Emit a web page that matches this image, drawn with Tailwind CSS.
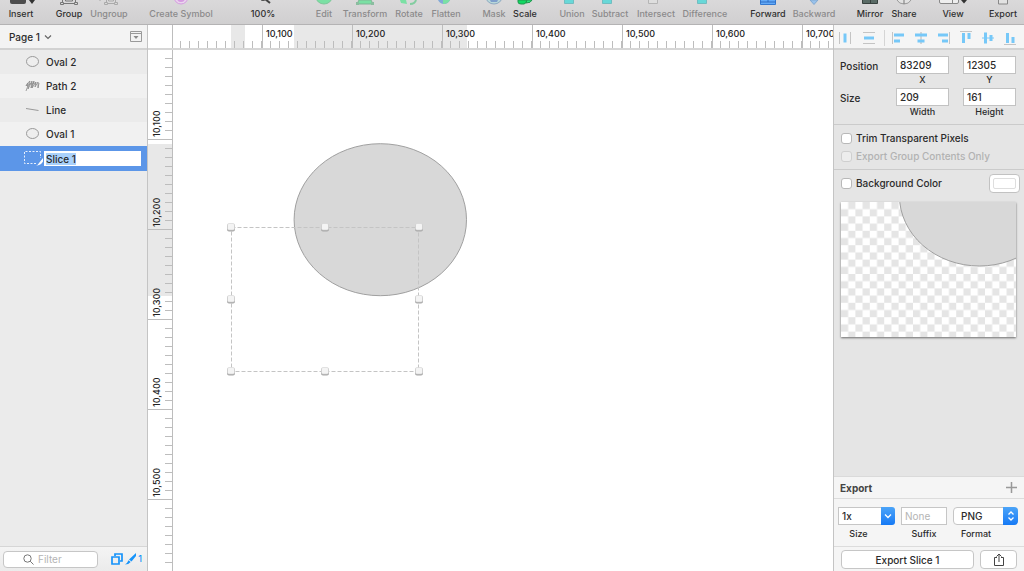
<!DOCTYPE html>
<html lang="en">
<head>
<meta charset="utf-8">
<meta name="viewport" content="width=device-width, initial-scale=1">
<title>Page 1</title>
<script src="https://cdn.jsdelivr.net/npm/@tailwindcss/browser@4"></script>
</head>
<body class="h-screen flex flex-col overflow-hidden bg-white font-['Inter','Liberation_Sans',sans-serif] text-[10px] leading-3 font-medium text-[#2b2b2b]">

<!-- Toolbar -->
<header class="flex h-[25px] shrink-0 border-b border-[#b4b3b4] bg-linear-to-b from-[#dad9da] to-[#d0cfd0] text-[9px] text-[#2f2f2f]">
    <button class="flex w-[42px] shrink-0 flex-col items-center whitespace-nowrap"><svg class="h-2 w-7" viewBox="0 0 28 8"><path d="M3 0h16v2q0 2-2 2H5q-2 0-2-2z" fill="#4d4d4d"/><path d="M22 0h6l-3 4z" fill="#333"/></svg>Insert</button>
    <button class="ml-2.5 flex w-[34px] shrink-0 flex-col items-center whitespace-nowrap"><svg class="h-2 w-5" viewBox="0 0 20 8" fill="none" stroke="#777"><path d="M3.500 0v4M16.500 0v4M4 3.500h12M6.500 0v1h7V0"/><path d="M1.500 2.500h3v2h-3zM15.500 2.500h3v2h-3z" fill="#d8d8d8"/></svg>Group</button>
    <button class="flex w-[46px] shrink-0 flex-col items-center whitespace-nowrap text-[#8b8a8b]"><svg class="h-2 w-5" viewBox="0 0 20 8" fill="none" stroke="#aaa"><path d="M0 0h2M7.500 0v4M16.500 0v4M8 3.500h8M9.500 0v1h5V0"/><path d="M5.500 2.500h3v2h-3zM15.500 2.500h3v2h-3z" fill="#d8d8d8"/></svg>Ungroup</button>
    <button class="ml-3.5 flex w-[70px] shrink-0 flex-col items-center whitespace-nowrap text-[#8b8a8b]"><svg class="h-2 w-4" viewBox="0 0 16 8" fill="none" stroke="#d59ce0"><path d="M1 -3a7 7 0 0 0 14 0" fill="#ead5ee"/><path d="M5 0q3 2 6 0" stroke-width="2"/></svg>Create Symbol</button>
    <button class="ml-[29px] flex w-9 shrink-0 flex-col items-center whitespace-nowrap"><svg class="h-2 w-5" viewBox="0 0 20 8" fill="none" stroke="#444"><path d="M8 0q2 1 4 0" /><path d="M12 -1l5 4" stroke-width="2"/></svg>100%</button>
    <button class="ml-[31px] flex w-6 shrink-0 flex-col items-center whitespace-nowrap text-[#8b8a8b]"><svg class="h-2 w-4" viewBox="0 0 16 8"><path d="M0 -3a8 7 0 0 0 16 0z" fill="#7be0a4" stroke="#80c79b"/></svg>Edit</button>
    <button class="ml-1 flex w-[50px] shrink-0 flex-col items-center whitespace-nowrap text-[#8b8a8b]"><svg class="h-2 w-5" viewBox="0 0 20 8"><path d="M4 0h12l2 4H2z" fill="#7be0a4" stroke="#80b596"/><path d="M1 2h3v3H1zM16 2h3v3h-3z" fill="#8bbda0"/></svg>Transform</button>
    <button class="ml-0.5 flex w-[34px] shrink-0 flex-col items-center whitespace-nowrap text-[#8b8a8b]"><svg class="h-2 w-5" viewBox="0 0 20 8" fill="none"><path d="M1 0l1 3 6 1-1-4z" fill="#7be0a4"/><path d="M11 4q5 0 6-4" stroke="#83cda0" stroke-width="2"/></svg>Rotate</button>
    <button class="ml-0.5 flex w-9 shrink-0 flex-col items-center whitespace-nowrap text-[#8b8a8b]"><svg class="mr-1 h-2 w-3" viewBox="0 0 12 8"><path d="M0 0q2 4 6 4t6-4z" fill="#83a9d8"/><path d="M5 0v4q5 0 7-4z" fill="#7be0a4"/></svg>Flatten</button>
    <button class="ml-4 flex w-7 shrink-0 flex-col items-center whitespace-nowrap text-[#8b8a8b]"><svg class="h-2 w-4" viewBox="0 0 16 8"><path d="M0 -3a8 7 0 0 0 16 0z" fill="#b9d8d9" stroke="#8ea9c2"/><path d="M4 0h8l-1 2H5z" fill="#7f9fcc"/></svg>Mask</button>
    <button class="ml-[3px] flex w-7 shrink-0 flex-col items-center whitespace-nowrap"><svg class="h-2 w-4" viewBox="0 0 16 8"><path d="M1 0v2q0 2 3 2h3q2 0 3-4z" fill="#10d862" stroke="#21964f"/><path d="M9 3q5 0 6-3h-5z" fill="#2fe47c" stroke="#21964f"/></svg>Scale</button>
    <button class="ml-[18px] flex w-[30px] shrink-0 flex-col items-center whitespace-nowrap text-[#8b8a8b]"><svg class="mr-1.5 h-2 w-3" viewBox="0 0 12 8"><path d="M1.500 0v3.500h9V0" fill="#68d8d8" stroke="#72bdc0"/></svg>Union</button>
    <button class="ml-px flex w-11 shrink-0 flex-col items-center whitespace-nowrap text-[#8b8a8b]"><svg class="mr-1.5 h-2 w-3" viewBox="0 0 12 8"><path d="M1.500 0v3.500h9V0" fill="#68d8d8" stroke="#72bdc0"/></svg>Subtract</button>
    <button class="ml-0.5 flex w-11 shrink-0 flex-col items-center whitespace-nowrap text-[#8b8a8b]"><svg class="mr-1.5 h-2 w-3" viewBox="0 0 12 8"><path d="M1.500 0v3.500h9V0" fill="#dedede" stroke="#b5b5b5"/></svg>Intersect</button>
    <button class="ml-0.5 flex w-[50px] shrink-0 flex-col items-center whitespace-nowrap text-[#8b8a8b]"><svg class="mr-1.5 h-2 w-3" viewBox="0 0 12 8"><path d="M1.500 0v3.500h9V0" fill="#68d8d8" stroke="#72bdc0"/></svg>Difference</button>
    <button class="ml-[18px] flex w-10 shrink-0 flex-col items-center whitespace-nowrap"><svg class="h-2 w-4" viewBox="0 0 16 8"><path d="M.5 0v4.500h15V0" fill="#62aaf8" stroke="#3478cf"/><path d="M0 2h16M8 0v2" stroke="#2c6cc4"/></svg>Forward</button>
    <button class="ml-[3px] flex w-[46px] shrink-0 flex-col items-center whitespace-nowrap text-[#8b8a8b]"><svg class="h-2 w-3" viewBox="0 0 12 8"><path d="M2 0h8L6 4.500z" fill="#99c2ec" stroke="#83a9d0"/></svg>Backward</button>
    <button class="ml-[18px] flex w-[30px] shrink-0 flex-col items-center whitespace-nowrap"><svg class="h-2 w-4" viewBox="0 0 16 8"><path d="M.5 0v3.500h15V0" fill="#5a6b66" stroke="#38423f"/><path d="M8.500 0v4" stroke="#38423f"/></svg>Mirror</button>
    <button class="ml-1 flex w-[30px] shrink-0 flex-col items-center whitespace-nowrap"><svg class="h-2 w-4" viewBox="0 0 16 8" fill="none" stroke="#999"><path d="M1 0q2 4 7 4t7-4" fill="#e2e2e2"/><path d="M8 0v4" stroke="#777"/></svg>Share</button>
    <button class="ml-[22px] flex w-6 shrink-0 flex-col items-center whitespace-nowrap"><svg class="h-2 w-7 shrink-0" viewBox="0 0 28 8"><path d="M.5 0v2q0 1.500 1.500 1.500h16q1.500 0 1.500-1.500V0" fill="#eee" stroke="#888"/><path d="M13.500 0v3" stroke="#888"/><path d="M22 0h6l-3 3.500z" fill="#333"/></svg>View</button>
    <button class="ml-[22px] flex w-8 shrink-0 flex-col items-center whitespace-nowrap"><svg class="h-2 w-3" viewBox="0 0 12 8"><path d="M1.500 0v4h9V0" fill="#e2e2e2" stroke="#888"/></svg>Export</button>
</header>

<div class="flex min-h-0 flex-1">

    <!-- Layer list -->
    <aside class="flex w-[148px] shrink-0 flex-col border-r border-[#c4c4c4] bg-[#ebebeb]">
        <div class="flex h-[25px] items-center border-b-2 border-[#d2d2d2] bg-[#f3f3f3] pl-[9px] pr-[5px]">
            <button class="flex items-center gap-1">Page 1<svg class="size-2" viewBox="0 0 8 8" fill="none" stroke="#666" stroke-width="1.200"><path d="M1 2.500l3 3 3-3"/></svg></button>
            <button class="ml-auto" aria-label="Toggle pages"><svg class="h-[11px] w-3" viewBox="0 0 12 11" fill="none" stroke="#9a9a9a"><path d="M.5 .5h11v10H.5zM1 2.500h10"/><path d="M3.500 5h5L6 8z" fill="#8a8a8a" stroke="none"/></svg></button>
        </div>
        <ul>
            <li class="flex h-6 items-center gap-1.5 pl-[25px]"><svg class="h-3 w-[15px]" viewBox="0 0 15 12"><ellipse cx="7.500" cy="5.500" rx="6" ry="5" fill="#eee" stroke="#999"/></svg>Oval 2</li>
            <li class="flex h-6 items-center gap-1.5 bg-[#f1f1f1] pl-[25px]"><svg class="h-3 w-[15px]" viewBox="0 0 15 12" fill="none" stroke="#888" stroke-width=".8"><path d="M1 11q2-4 2-8-1 2-2 3 1-3 4-5l-2 8 4-8-1 7 3-7-2 7 4-6-1 5 3-5v6l1-5M2 6q4-4 9-3"/></svg>Path 2</li>
            <li class="flex h-6 items-center gap-1.5 pl-[25px]"><svg class="h-3 w-[15px]" viewBox="0 0 15 12"><path d="M1 4.500l12.500 2" stroke="#999"/></svg>Line</li>
            <li class="flex h-6 items-center gap-1.5 bg-[#f1f1f1] pl-[25px]"><svg class="h-3 w-[15px]" viewBox="0 0 15 12"><ellipse cx="7.500" cy="5.500" rx="6" ry="5" fill="#eee" stroke="#999"/></svg>Oval 1</li>
            <li class="flex h-[25px] items-center bg-[#5c96e8] pl-6 pr-1.5">
                <svg class="h-[15px] w-5 shrink-0" viewBox="0 0 20 15" fill="none" stroke="#fff"><path d="M12 12.500H.5v-12h16V7" stroke-dasharray="2 1.500" opacity=".85"/><path d="M12 14.500q2-.5 3-2.500l4-5v3.500q-2 4-7 4z" fill="#fff" stroke="none"/></svg>
                <input id="layer-name" type="text" aria-label="Layer name" value="Slice 1" class="h-[15px] min-w-0 flex-1 bg-white pl-0.5 outline-none selection:bg-[#a9d1fb] selection:text-[#2b2b2b]">
            </li>
        </ul>
        <div class="mt-auto flex h-[25px] items-center border-t border-[#d6d6d6] bg-linear-to-b from-[#f4f4f4] to-[#ebebeb] pl-[3px] pr-[5px]">
            <label class="flex h-[17px] w-[95px] items-center gap-1 rounded-sm border border-[#c6c6c6] bg-white pl-[19px]">
                <svg class="size-[11px] shrink-0" viewBox="0 0 11 11" fill="none" stroke="#777"><circle cx="4.500" cy="4.500" r="3.700"/><path d="M7.200 7.200L10.500 10.500"/></svg>
                <input type="text" aria-label="Filter" placeholder="Filter" class="min-w-0 flex-1 font-normal outline-none placeholder:text-[#b4b4b4]">
            </label>
            <button class="ml-auto" aria-label="Show shapes"><svg class="size-3" viewBox="0 0 12 12" fill="none" stroke="#1693fa" stroke-width="1.700"><path d="M1 4h7v7H1z"/><path d="M4 3V1h7v7H9"/></svg></button>
            <button class="ml-0.5 flex items-center gap-0.5 text-[9px] text-[#1693fa]" aria-label="Slices: 1"><svg class="h-3 w-[11px]" viewBox="0 0 11 12" fill="#1693fa"><path d="M11 0v3L6.500 8.500 4 6.500zM3.500 7.200l2.200 1.800Q3.500 11.500 0 11.500q2.500-1.500 3.500-4.300z"/></svg>1</button>
        </div>
    </aside>

    <!-- Rulers and canvas -->
    <main class="flex min-w-0 flex-1 flex-col bg-white">
        <svg class="h-[25px] w-full shrink-0" fill="#222" stroke="none">
            <defs>
                <pattern id="ticks-x" x="24" width="9" height="25" patternUnits="userSpaceOnUse"><path d="M9 16v7H8v-7z" fill="#bdbdbd"/></pattern>
            </defs>
            <path d="M83 0h14v23H83zM146 0h173v23H146z" fill="#e8e8e8"/>
            <rect x="25" y="0" width="100%" height="25" fill="url(#ticks-x)"/>
            <path d="M24 0h1v25h-1zM114 0h1v23h-1zM204 0h1v23h-1zM294 0h1v23h-1zM384 0h1v23h-1zM474 0h1v23h-1zM564 0h1v23h-1zM654 0h1v23h-1z" fill="#bdbdbd"/>
            <rect y="23" width="100%" height="2" fill="#d6d6d6"/>
            <g font-size="9">
                <text x="118" y="12">10,100</text><text x="208" y="12">10,200</text><text x="298" y="12">10,300</text><text x="388" y="12">10,400</text><text x="478" y="12">10,500</text><text x="568" y="12">10,600</text><text x="658" y="12">10,700</text>
            </g>
        </svg>
        <div class="flex min-h-0 flex-1">
            <svg class="h-full w-[25px] shrink-0" fill="#222">
                <defs>
                    <pattern id="ticks-y" y="-1" width="25" height="9" patternUnits="userSpaceOnUse"><path d="M17 0h7v1h-7z" fill="#bdbdbd"/></pattern>
                </defs>
                <rect y="94" width="24" height="152" fill="#e8e8e8"/>
                <rect width="25" height="100%" fill="url(#ticks-y)"/>
                <path d="M0 89h24v1H0zM0 179h24v1H0zM0 269h24v1H0zM0 359h24v1H0zM0 449h24v1H0z" fill="#bdbdbd"/>
                <rect x="24" width="1" height="100%" fill="#bdbdbd"/>
                <g font-size="9">
                    <text transform="translate(12 87) rotate(-90)">10,100</text><text transform="translate(12 177) rotate(-90)">10,200</text><text transform="translate(12 267) rotate(-90)">10,300</text><text transform="translate(12 357) rotate(-90)">10,400</text><text transform="translate(12 447) rotate(-90)">10,500</text>
                </g>
            </svg>
            <svg class="h-full min-w-0 flex-1">
                <defs>
                    <g id="handle"><rect x="-4" y="-3" width="8" height="7.500" rx="2" fill="#a8a8a8"/><rect x="-3.500" y="-3.500" width="7" height="6.500" rx="1.500" fill="#f4f4f4" stroke="#d2d2d2" stroke-width=".6"/></g>
                </defs>
                <ellipse cx="207.300" cy="169.700" rx="86.200" ry="76" fill="#d8d8d8" stroke="#a0a0a0"/>
                <path d="M58.500 177.500h187v144h-187z" fill="none" stroke="#c4c4c4" stroke-dasharray="4 2"/>
                <use href="#handle" x="58" y="177"/><use href="#handle" x="152" y="177"/><use href="#handle" x="246" y="177"/>
                <use href="#handle" x="58" y="249"/><use href="#handle" x="246" y="249"/>
                <use href="#handle" x="58" y="321"/><use href="#handle" x="152" y="321"/><use href="#handle" x="246" y="321"/>
            </svg>
        </div>
    </main>

    <!-- Inspector -->
    <aside class="flex w-[191px] shrink-0 flex-col border-l border-[#c4c4c4] bg-[#e5e5e5]">
        <div class="flex h-[25px] items-center border-b-2 border-[#d2d2d2] bg-[#f5f5f5] pl-1 pt-0.5">
            <button aria-label="Distribute horizontally"><svg class="size-3.5" viewBox="0 0 14 14"><path d="M1.500 1v12M12.500 1v12" stroke="#c4c4c4"/><path d="M5.500 2.500h3v9h-3z" fill="#76c8f8"/></svg></button>
            <button class="ml-2.5" aria-label="Distribute vertically"><svg class="size-3.5" viewBox="0 0 14 14"><path d="M1 1.500h12M1 12.500h12" stroke="#c4c4c4"/><path d="M2 5.500h10v3H2z" fill="#76c8f8"/></svg></button>
            <span class="ml-2 h-4 w-px bg-[#d5d5d5]"></span>
            <button class="ml-1.5" aria-label="Align left"><svg class="size-3.5" viewBox="0 0 14 14"><path d="M1.500 1v12" stroke="#c4c4c4"/><path d="M3 2.500h10v3H3zM3 8.500h6v3H3z" fill="#76c8f8"/></svg></button>
            <button class="ml-[9px]" aria-label="Align center"><svg class="size-3.5" viewBox="0 0 14 14"><path d="M7 1v12" stroke="#b4b4b4"/><path d="M1 2.500h12v3H1zM3.500 8.500h7v3h-7z" fill="#76c8f8"/></svg></button>
            <button class="ml-[9px]" aria-label="Align right"><svg class="size-3.5" viewBox="0 0 14 14"><path d="M12.500 1v12" stroke="#c4c4c4"/><path d="M1 2.500h10v3H1zM5 8.500h6v3H5z" fill="#76c8f8"/></svg></button>
            <button class="ml-2" aria-label="Align top"><svg class="size-3.5" viewBox="0 0 14 14"><path d="M1 .5h12" stroke="#c4c4c4"/><path d="M3 2h3v10H3zM8.500 2h3v6h-3z" fill="#76c8f8"/></svg></button>
            <button class="ml-2" aria-label="Align middle"><svg class="size-3.5" viewBox="0 0 14 14"><path d="M1 7h12" stroke="#76c8f8"/><path d="M3 1.500h3v11H3zM8.500 4h3v6h-3z" fill="#76c8f8"/></svg></button>
            <button class="ml-2" aria-label="Align bottom"><svg class="size-3.5" viewBox="0 0 14 14"><path d="M1 13.500h12" stroke="#c4c4c4"/><path d="M3 2h3v10H3zM8.500 6h3v6h-3z" fill="#76c8f8"/></svg></button>
        </div>

        <div class="grid grid-cols-[56px_53px_53px] gap-y-0.5 pl-1.5 pt-1.5 pb-1.5">
            <span class="pt-1">Position</span>
            <label class="flex flex-col items-center text-[9px]"><input type="text" value="83209" class="h-[18px] w-full border border-[#c2c2c2] bg-white pl-[3px] text-[10px] outline-none">X</label>
            <label class="ml-3.5 flex w-[53px] flex-col items-center text-[9px]"><input type="text" value="12305" class="h-[18px] w-full border border-[#c2c2c2] bg-white pl-[3px] text-[10px] outline-none">Y</label>
            <span class="pt-1">Size</span>
            <label class="flex flex-col items-center text-[9px]"><input type="text" value="209" class="h-[18px] w-full border border-[#c2c2c2] bg-white pl-[3px] text-[10px] outline-none">Width</label>
            <label class="ml-3.5 flex w-[53px] flex-col items-center text-[9px]"><input type="text" value="161" class="h-[18px] w-full border border-[#c2c2c2] bg-white pl-[3px] text-[10px] outline-none">Height</label>
        </div>

        <div class="flex h-[45px] flex-col justify-center gap-1.5 border-t border-[#cbcbcb] pl-[7px]">
            <label class="flex items-center gap-1"><input type="checkbox" class="size-[11px] appearance-none rounded-[3px] border border-[#b8b8b8] bg-white">Trim Transparent Pixels</label>
            <label class="flex items-center gap-1 text-[#b2b2b2]"><input type="checkbox" disabled class="size-[11px] appearance-none rounded-[3px] border border-[#cfcfcf] bg-[#ededed]">Export Group Contents Only</label>
        </div>

        <div class="flex h-[27px] items-center border-t border-[#cbcbcb] pl-[7px] pr-1">
            <label class="flex items-center gap-1"><input type="checkbox" class="size-[11px] appearance-none rounded-[3px] border border-[#b8b8b8] bg-white">Background Color</label>
            <button class="ml-auto h-[19px] w-[31px] rounded-sm border border-[#c2c2c2] bg-white p-[3px]" aria-label="Background color"><span class="block h-full rounded-[2px] border border-[#dedede]"></span></button>
        </div>

        <div class="mt-1.5 ml-[7px] mr-2 bg-white shadow-[0_1px_2px_#0008]">
            <svg class="block h-[135px] w-full">
                <defs>
                    <pattern id="checker" width="14.400" height="14.400" patternUnits="userSpaceOnUse"><path d="M7.200 0h7.200v7.200H7.200zM0 7.200h7.200v7.200H0z" fill="#e5e5e5"/></pattern>
                </defs>
                <rect width="100%" height="100%" fill="url(#checker)"/>
                <ellipse cx="138.400" cy="-6.500" rx="80" ry="70.500" fill="#d8d8d8" stroke="#a0a0a0"/>
            </svg>
        </div>

        <!-- Export settings -->
        <section class="mt-auto border-t border-[#dadada] bg-[#f5f5f5]">
            <div class="flex h-[22px] items-center justify-between border-b border-[#dcdcdc] pl-1.5 pr-[7px]">
                <h2 class="font-bold text-[#444]">Export</h2>
                <button aria-label="Add export size"><svg class="size-[11px]" viewBox="0 0 11 11" stroke="#999" stroke-width="1.500"><path d="M5.500 0v11M0 5.500h11"/></svg></button>
            </div>
            <div class="flex h-[47px] items-start pl-1 pt-2 text-[9px]">
                <div class="w-[57px]">
                    <div class="flex h-[18px]">
                        <input id="size" type="text" value="1x" class="min-w-0 flex-1 border border-r-0 border-[#c6c6c6] bg-white pl-[3px] text-[10px] outline-none">
                        <button aria-label="Choose size" class="flex w-3.5 items-center justify-center rounded-r-[3px] bg-linear-to-b from-[#4ba4f8] to-[#1479f5]"><svg class="size-2" viewBox="0 0 8 8" fill="none" stroke="#fff" stroke-width="1.300"><path d="M1 2.500l3 3 3-3"/></svg></button>
                    </div>
                    <label for="size" class="mt-[3px] block pr-4 text-center">Size</label>
                </div>
                <div class="ml-1.5 w-[46px]">
                    <input id="suffix" type="text" placeholder="None" class="block h-[18px] w-full border border-[#c6c6c6] bg-white pl-[3px] text-[10px] font-normal outline-none placeholder:text-[#b4b4b4]">
                    <label for="suffix" class="mt-[3px] block text-center">Suffix</label>
                </div>
                <div class="relative ml-1.5 w-[65px]">
                    <select id="format" class="block h-[18px] w-full appearance-none rounded-sm border border-[#c6c6c6] bg-white pl-[7px] text-[10px] outline-none"><option>PNG</option><option>JPG</option><option>PDF</option></select>
                    <span class="pointer-events-none absolute top-0 right-0 flex h-[18px] w-[15px] items-center justify-center rounded-r-sm bg-linear-to-b from-[#4ba4f8] to-[#1479f5]"><svg class="h-2.5 w-2" viewBox="0 0 8 10" fill="none" stroke="#fff" stroke-width="1.300"><path d="M1.500 3.500L4 1l2.500 2.500M1.500 6.500L4 9l2.500-2.500"/></svg></span>
                    <label for="format" class="mt-[3px] block pr-[19px] text-center">Format</label>
                </div>
            </div>
            <div class="flex h-[25px] items-start gap-1.5 border-t border-[#dcdcdc] px-[7px] pt-[3px]">
                <button class="h-[19px] flex-1 rounded-sm border border-[#c6c6c6] bg-white">Export Slice 1</button>
                <button class="flex h-[19px] w-[37px] items-center justify-center rounded-sm border border-[#c6c6c6] bg-white" aria-label="Share"><svg class="h-3.5 w-3" viewBox="0 0 12 14" fill="none" stroke="#444"><path d="M4 4.500H1.500v8h9v-8H8M6 9V1.500M3.500 3.500L6 1l2.500 2.500"/></svg></button>
            </div>
        </section>
    </aside>
</div>

<script>
// The slice is being renamed, so its name starts out selected
const layerName = document.getElementById('layer-name');
layerName.focus();
layerName.select();
</script>
</body>
</html>
